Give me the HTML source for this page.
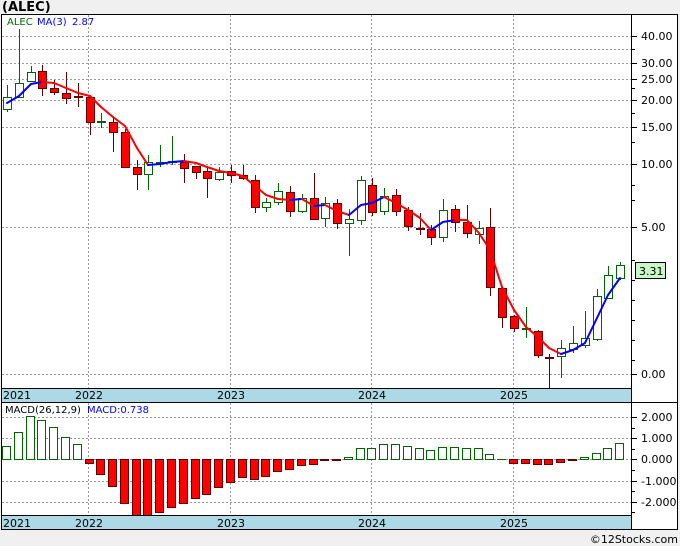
<!DOCTYPE html>
<html><head><meta charset="utf-8"><style>
html,body{margin:0;padding:0;background:#f0f0f0;}
svg{display:block;font-family:"DejaVu Sans","Liberation Sans",sans-serif;}
</style></head><body>
<svg id="c" width="680" height="546" xmlns="http://www.w3.org/2000/svg">
<rect x="0" y="0" width="680" height="546" fill="#f0f0f0"/>
<rect x="1" y="14" width="677" height="516" fill="#fff"/>
<text x="2" y="11" font-size="13" font-weight="bold" fill="#000">(ALEC)</text>
<g id="grid" stroke="#999" stroke-width="1" stroke-dasharray="2,2" fill="none"></g>
<g id="main"></g>
<rect x="1" y="388" width="630" height="14" fill="#add8e6"/>
<rect x="1" y="515" width="630" height="15" fill="#add8e6"/>
<g stroke="#000" stroke-width="1" fill="none">
<rect x="1.5" y="14.5" width="676" height="515"/>
<line x1="1" y1="388.5" x2="631" y2="388.5"/>
<line x1="1" y1="402.5" x2="678" y2="402.5"/>
<line x1="1" y1="515.5" x2="631" y2="515.5"/>
<line x1="631.5" y1="14" x2="631.5" y2="530"/>
</g>
<g font-size="11" fill="#000">
<text x="3" y="399">2021</text><text x="75" y="399">2022</text><text x="217" y="399">2023</text><text x="358" y="399">2024</text><text x="500" y="399">2025</text>
<text x="3" y="527">2021</text><text x="75" y="527">2022</text><text x="217" y="527">2023</text><text x="358" y="527">2024</text><text x="500" y="527">2025</text>
</g>
<text x="7" y="25" font-size="10" fill="#060">ALEC</text>
<text x="37" y="25" font-size="10" fill="#00f">MA(3)</text>
<text x="72" y="25" font-size="10" fill="#00f">2.87</text>
<text x="5" y="413" font-size="10" fill="#000">MACD(26,12,9)</text>
<text x="87" y="413" font-size="10" fill="#00f">MACD:0.738</text>
<g id="axis" font-size="11" fill="#000"></g>
<rect x="635.5" y="262.5" width="30" height="16" fill="#c8f8c8" stroke="#000"/>
<text x="639" y="275" font-size="11" fill="#000">3.31</text>
<text x="678" y="543" font-size="11" fill="#000" text-anchor="end">©12Stocks.com</text>
</svg>
<script>
var NS="http://www.w3.org/2000/svg";
function el(p,t,a,txt){var e=document.createElementNS(NS,t);for(var k in a)e.setAttribute(k,a[k]);if(txt)e.textContent=txt;document.getElementById(p).appendChild(e);return e;}
[36,49,63,79,100,127,164,227,374].forEach(function(y){el('grid','line',{x1:2,y1:y+.5,x2:631,y2:y+.5});});
[417,438,459,481,502].forEach(function(y){el('grid','line',{x1:2,y1:y+.5,x2:631,y2:y+.5});});
[88,230,371,513].forEach(function(x){el('grid','line',{x1:x+.5,y1:15,x2:x+.5,y2:388});el('grid','line',{x1:x+.5,y1:403,x2:x+.5,y2:515});});
var pl=[[36,"40.00"],[63,"30.00"],[79,"25.00"],[100,"20.00"],[127,"15.00"],[164,"10.00"],[227,"5.00"],[374,"0.00"]];
pl.forEach(function(a){el('axis','line',{x1:631,y1:a[0]+.5,x2:637,y2:a[0]+.5,stroke:'#000'});el('axis','text',{x:641,y:a[0]+4},a[1]);});
[49,88,113,142,185,200,260,280,300,320,340,360].forEach(function(y){el('axis','line',{x1:631,y1:y+.5,x2:635,y2:y+.5,stroke:'#000'});});
var ml=[[417,"2.000"],[438,"1.000"],[459,"0.000"],[481,"-1.000"],[502,"-2.000"]];
ml.forEach(function(a){el('axis','line',{x1:631,y1:a[0]+.5,x2:637,y2:a[0]+.5,stroke:'#000'});el('axis','text',{x:641,y:a[0]+4},a[1]);});
[428,449,470,491,512].forEach(function(y){el('axis','line',{x1:631,y1:y+.5,x2:635,y2:y+.5,stroke:'#000'});});
var C=[[97,109,85,112,1],[83,97,29,97,1],[72,81,66,81,1],[71,88,65,96,0],[88,92,80,95,0],[93,98,72,104,0],[96,97,83,107,0],[97,122,97,135,0],[121,122,113,128,1],[122,132,118,152,0],[132,167,129,167,0],[167,174,160,190,0],[162,174,155,190,1],[162,163,145,167,1],[161,162,136,165,1],[162,168,154,183,0],[166,172,166,179,0],[171,178,168,198,0],[172,179,167,181,1],[171,175,165,183,0],[175,178,165,180,0],[180,207,175,213,0],
[202,207,198,212,1],[191,202,183,205,1],[192,211,186,217,0],[198,211,194,213,1],[198,219,173,219,0],[203,218,197,227,1],[203,223,199,229,0],[219,223,209,256,1],[180,220,176,225,1],[185,212,178,216,0],[196,211,188,215,1],[195,211,189,216,0],[210,226,207,231,0],[228,229,213,235,0],[229,237,225,245,0],[210,237,199,242,1],[209,222,205,232,0],[222,233,205,238,0],[228,234,221,244,1],[227,287,208,296,0],[288,317,287,328,0],[316,328,315,332,0],[328,329,307,338,1],[331,355,330,358,0],[357,358,354,388,0],[348,356,340,378,1],[343,349,326,353,1],[338,345,311,348,1],[296,339,289,341,1],[275,298,266,298,1],[265,278,262,280,1]];
function X(i){return Math.round(7+i*11.79);}
C.forEach(function(c,i){var x=X(i);var col=c[4]?'#060':'#600';
el('main','line',{x1:x+.5,y1:c[2],x2:x+.5,y2:c[3],stroke:col,'stroke-width':1});
var h=Math.max(c[1]-c[0],1);
if(c[4]) el('main','rect',{x:x-3.5,y:c[0]+.5,width:8,height:h,fill:'#fff',stroke:'#060'});
else el('main','rect',{x:x-3.5,y:c[0]+.5,width:8,height:h,fill:'#f00',stroke:'#600'});
});
var M=[103,96,84,82,83,88,93,96,107,117,126,148,165,164,162,161,163,167,171,173,176,186,195,199,200,199,206,205,211,215,205,203,197,203,210,218,230,222,220,220,233,250,287,310,327,337,348,354,350,343,318,295,278];
for(var i=0;i<M.length-1;i++){var col=M[i+1]<M[i]?'#00f':'#f00';
el('main','line',{x1:X(i),y1:M[i],x2:X(i+1),y2:M[i+1],stroke:col,'stroke-width':2,'stroke-linecap':'round'});}
var H=[446,432,416,420,427,437,444,463,474,486,503,515,515,512,507,503,498,494,487,482,477,479,476,471,469,465,464,460,460,457,448,448,444,444,446,448,450,447,447,448,448,454,459,463,463,464,464,462,460,457,453,448,443];
H.forEach(function(t,i){var x=X(i)-1;
if(t<459){el('main','rect',{x:x-3.5,y:t+.5,width:8,height:459-t,fill:'#fff',stroke:'#060'});}
else if(t==459){el('main','line',{x1:x-4,y1:459.5,x2:x+5,y2:459.5,stroke:'#060'});}
else {el('main','rect',{x:x-3.5,y:459.5,width:8,height:Math.min(t,515)-459,fill:'#f00',stroke:'#600'});}
});
</script>
</body></html>
